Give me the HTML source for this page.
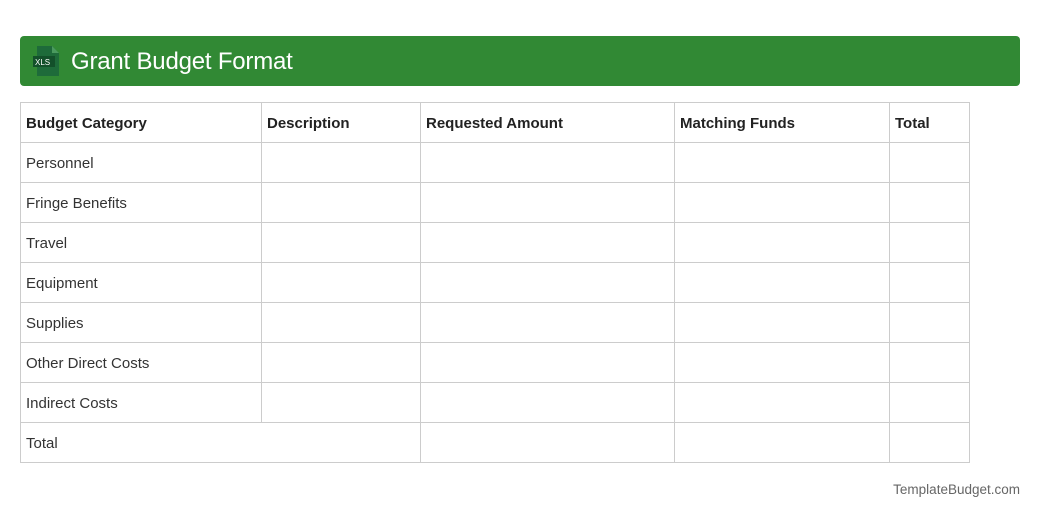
<!DOCTYPE html>
<html><head><style>
body{margin:0;width:1040px;height:520px;background:#fff;font-family:"Liberation Sans",Arial,sans-serif;position:relative;color:#333}
.hdr{position:absolute;left:20px;top:36px;width:1000px;height:50px;background:#318934;border-radius:4px}
.hdr .t{position:absolute;left:51px;top:12px;font-size:24px;color:#fff;letter-spacing:-0.2px}
.icon{position:absolute;left:11px;top:10px}
table{position:absolute;left:20px;top:102px;border-collapse:collapse;font-size:15px}
td{border:1px solid #ccc;height:40px;padding:1px 0 0 5px;box-sizing:border-box}
tr:first-child td{font-weight:bold;color:#222}
.f{position:absolute;right:20px;top:482px;font-size:13.5px;color:#666}
</style></head><body>
<div class="hdr"><svg class="icon" width="30" height="30" viewBox="0 0 30 30"><path d="M6 0H21L28 7V30H6Z" fill="#1e6b3a"/><path d="M21 0V7H28Z" fill="#4a9a5e"/><rect x="2" y="10" width="22" height="11" fill="#13502a"/><text x="4" y="19" font-size="8" fill="#fff" font-family="Liberation Sans">XLS</text></svg><div class="t">Grant Budget Format</div></div>
<table>
<colgroup><col style="width:241px"><col style="width:159px"><col style="width:254px"><col style="width:215px"><col style="width:80px"></colgroup>
<tr><td>Budget Category</td><td>Description</td><td>Requested Amount</td><td>Matching Funds</td><td>Total</td></tr>
<tr><td>Personnel</td><td></td><td></td><td></td><td></td></tr>
<tr><td>Fringe Benefits</td><td></td><td></td><td></td><td></td></tr>
<tr><td>Travel</td><td></td><td></td><td></td><td></td></tr>
<tr><td>Equipment</td><td></td><td></td><td></td><td></td></tr>
<tr><td>Supplies</td><td></td><td></td><td></td><td></td></tr>
<tr><td>Other Direct Costs</td><td></td><td></td><td></td><td></td></tr>
<tr><td>Indirect Costs</td><td></td><td></td><td></td><td></td></tr>
<tr><td colspan="2">Total</td><td></td><td></td><td></td></tr>
</table>
<div class="f">TemplateBudget.com</div>
</body></html>
